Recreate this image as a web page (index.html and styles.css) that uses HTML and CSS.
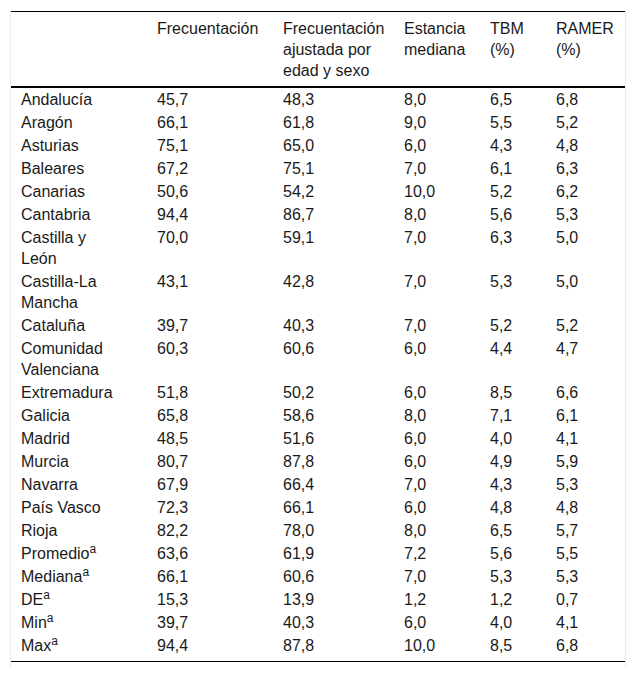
FILE: index.html
```html
<!DOCTYPE html>
<html lang="es">
<head>
    <meta charset="UTF-8">
    <title>Tabla</title>
    <link rel="stylesheet" href="styles.css">
</head>
<body>
    <div class="tabla-wrap">
        <table class="tabla">
            <colgroup>
                <col class="c1"><col class="c2"><col class="c3"><col class="c4"><col class="c5"><col class="c6">
            </colgroup>
            <thead>
                <tr>
                    <th></th>
                    <th>Frecuentación</th>
                    <th>Frecuentación ajustada por edad y sexo</th>
                    <th>Estancia mediana</th>
                    <th>TBM (%)</th>
                    <th>RAMER (%)</th>
                </tr>
            </thead>
            <tbody>
                <tr><td>Andalucía</td><td>45,7</td><td>48,3</td><td>8,0</td><td>6,5</td><td>6,8</td></tr>
                <tr><td>Aragón</td><td>66,1</td><td>61,8</td><td>9,0</td><td>5,5</td><td>5,2</td></tr>
                <tr><td>Asturias</td><td>75,1</td><td>65,0</td><td>6,0</td><td>4,3</td><td>4,8</td></tr>
                <tr><td>Baleares</td><td>67,2</td><td>75,1</td><td>7,0</td><td>6,1</td><td>6,3</td></tr>
                <tr><td>Canarias</td><td>50,6</td><td>54,2</td><td>10,0</td><td>5,2</td><td>6,2</td></tr>
                <tr><td>Cantabria</td><td>94,4</td><td>86,7</td><td>8,0</td><td>5,6</td><td>5,3</td></tr>
                <tr><td>Castilla y León</td><td>70,0</td><td>59,1</td><td>7,0</td><td>6,3</td><td>5,0</td></tr>
                <tr><td>Castilla-La Mancha</td><td>43,1</td><td>42,8</td><td>7,0</td><td>5,3</td><td>5,0</td></tr>
                <tr><td>Cataluña</td><td>39,7</td><td>40,3</td><td>7,0</td><td>5,2</td><td>5,2</td></tr>
                <tr><td>Comunidad Valenciana</td><td>60,3</td><td>60,6</td><td>6,0</td><td>4,4</td><td>4,7</td></tr>
                <tr><td>Extremadura</td><td>51,8</td><td>50,2</td><td>6,0</td><td>8,5</td><td>6,6</td></tr>
                <tr><td>Galicia</td><td>65,8</td><td>58,6</td><td>8,0</td><td>7,1</td><td>6,1</td></tr>
                <tr><td>Madrid</td><td>48,5</td><td>51,6</td><td>6,0</td><td>4,0</td><td>4,1</td></tr>
                <tr><td>Murcia</td><td>80,7</td><td>87,8</td><td>6,0</td><td>4,9</td><td>5,9</td></tr>
                <tr><td>Navarra</td><td>67,9</td><td>66,4</td><td>7,0</td><td>4,3</td><td>5,3</td></tr>
                <tr><td>País Vasco</td><td>72,3</td><td>66,1</td><td>6,0</td><td>4,8</td><td>4,8</td></tr>
                <tr><td>Rioja</td><td>82,2</td><td>78,0</td><td>8,0</td><td>6,5</td><td>5,7</td></tr>
                <tr><td>Promedio<sup>a</sup></td><td>63,6</td><td>61,9</td><td>7,2</td><td>5,6</td><td>5,5</td></tr>
                <tr><td>Mediana<sup>a</sup></td><td>66,1</td><td>60,6</td><td>7,0</td><td>5,3</td><td>5,3</td></tr>
                <tr><td>DE<sup>a</sup></td><td>15,3</td><td>13,9</td><td>1,2</td><td>1,2</td><td>0,7</td></tr>
                <tr><td>Min<sup>a</sup></td><td>39,7</td><td>40,3</td><td>6,0</td><td>4,0</td><td>4,1</td></tr>
                <tr class="ultima"><td>Max<sup>a</sup></td><td>94,4</td><td>87,8</td><td>10,0</td><td>8,5</td><td>6,8</td></tr>
            </tbody>
        </table>
    </div>
</body>
</html>
```

FILE: styles.css
```css
body {
    margin: 0;
    background: #fff;
    font-family: "Liberation Sans", Arial, sans-serif;
    color: #1a1a1a;
}
.tabla-wrap {
    margin: 10px 10px 0 10px;
    padding: 1px 0 6px 0;
    border-left: 1px solid #ececec;
    border-right: 1px solid #ececec;
}
.tabla {
    width: 100%;
    border-collapse: collapse;
    table-layout: fixed;
    font-size: 16px;
    border-top: 1px solid #000;
    border-bottom: 1px solid #000;
}
.c1 { width: 136px; }
.c2 { width: 126px; }
.c3 { width: 121px; }
.c4 { width: 86px; }
.c5 { width: 66px; }
.c6 { width: auto; }
.tabla th {
    font-weight: normal;
    text-align: left;
    vertical-align: top;
    line-height: 21px;
    padding: 6px 10px 5px 10px;
    border-bottom: 2px solid #000;
}
.tabla td {
    text-align: left;
    vertical-align: top;
    line-height: 21px;
    padding: 1px 10px;
}
.tabla td:first-child {
    padding-right: 24px;
}
.tabla tr.ultima td {
    padding-bottom: 5px;
}
.tabla sup {
    font-size: 12px;
    line-height: 0;
    vertical-align: 6px;
}
```
